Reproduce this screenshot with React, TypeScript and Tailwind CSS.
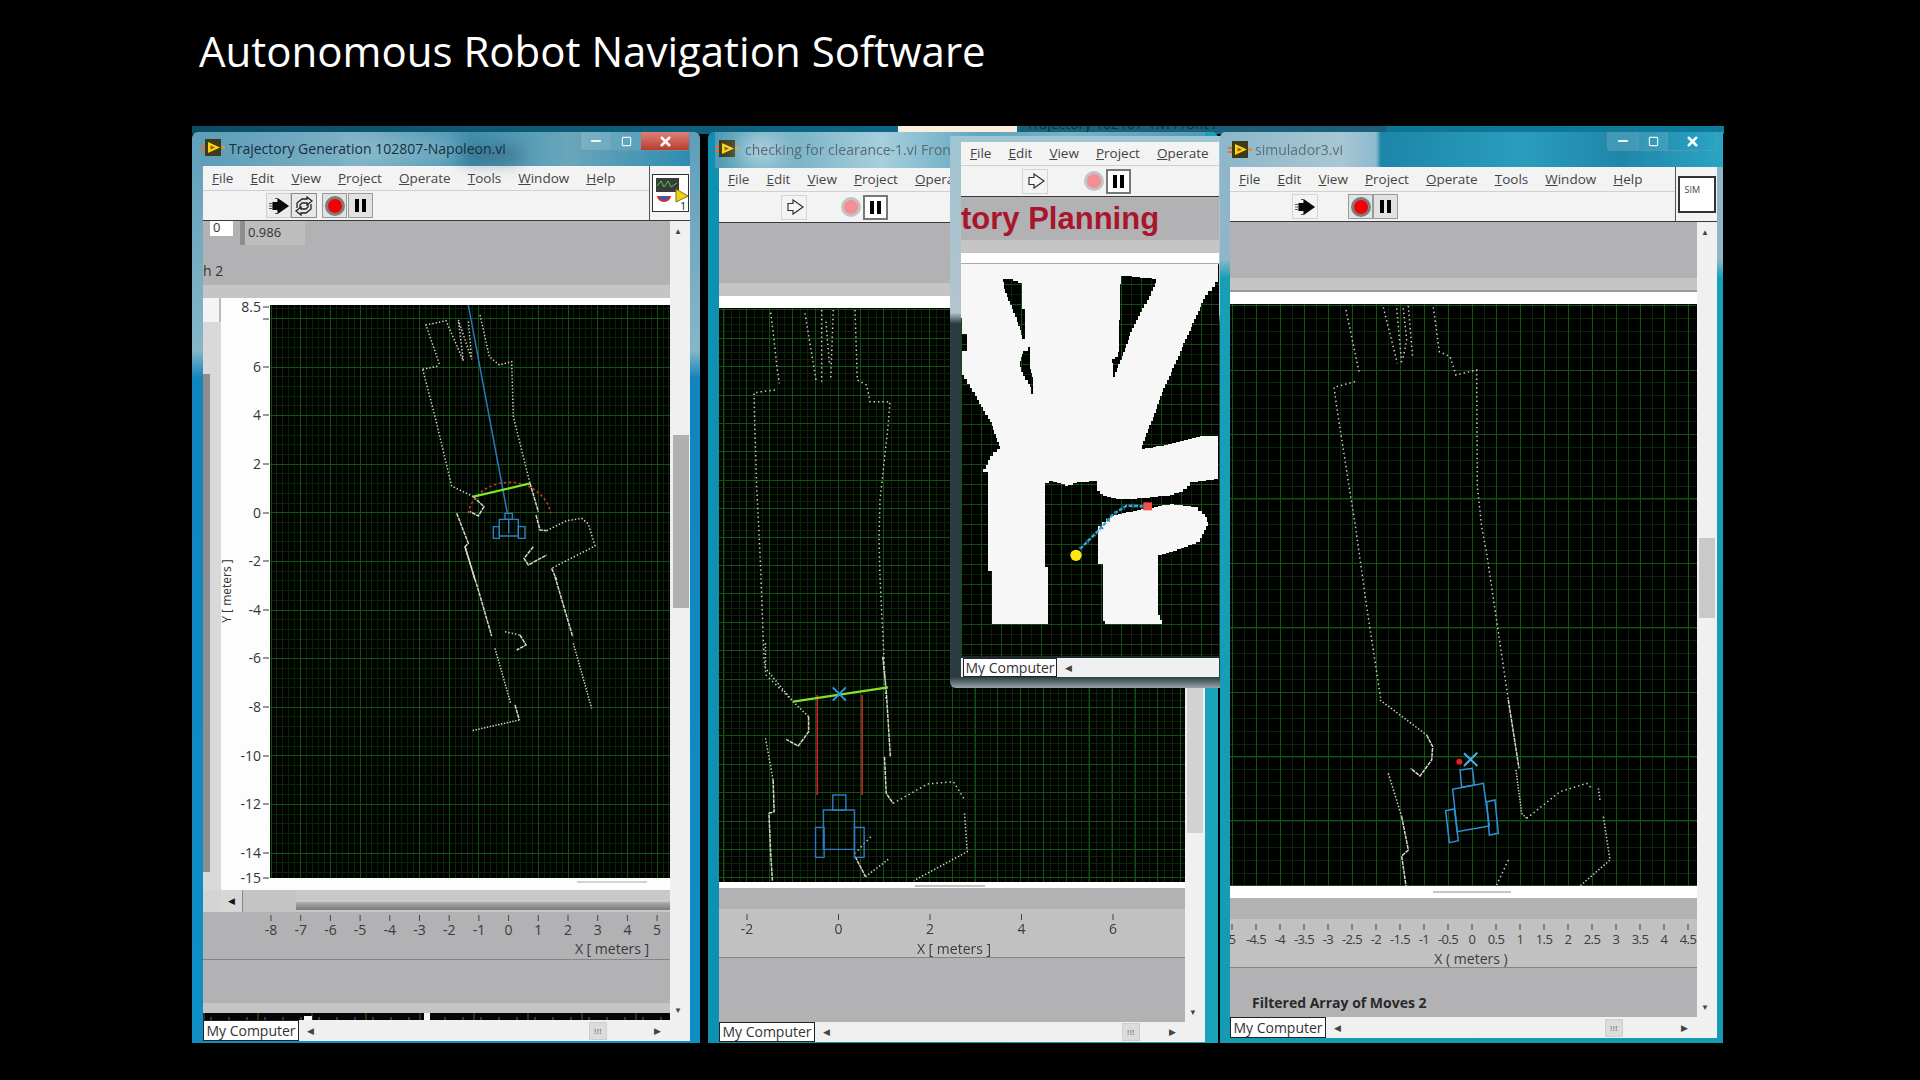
import React from 'react';
import { X, Minus, Square } from 'lucide-react';

type Pts = number[][];

const MENU_LONG = ['File', 'Edit', 'View', 'Project', 'Operate', 'Tools', 'Window', 'Help'];

const range = (o: number, a: number, b: number, step: number) => {
  const r: number[] = [];
  for (let v = o - Math.ceil((o - a) / step) * step; v <= b; v += step) r.push(v);
  return r;
};

const line = (pts: Pts) => pts.map((p) => p.join(',')).join(' ');

// turns a polygon into the blocky outline the occupancy map has
const stair = (pts: Pts, step: number) => {
  let d = '';
  pts.forEach((p, i) => {
    const q = pts[(i + 1) % pts.length];
    const n = Math.max(1, Math.round(Math.max(Math.abs(q[0] - p[0]), Math.abs(q[1] - p[1])) / step));
    if (i === 0) d += `M${p[0]} ${p[1]}`;
    for (let k = 1; k <= n; k++) {
      const x = p[0] + ((q[0] - p[0]) * k) / n;
      const y = p[1] + ((q[1] - p[1]) * k) / n;
      d += ` L${x} ${p[1] + ((q[1] - p[1]) * (k - 1)) / n} L${x} ${y}`;
    }
  });
  return d + ' Z ';
};

const Grid: React.FC<{ x0: number; x1: number; y0: number; y1: number; ox: number; oy: number; mx: number; my: number; nx: number; ny: number; major?: string; minor?: string }> = ({ x0, x1, y0, y1, ox, oy, mx, my, nx, ny, major = '#155015', minor = '#0a240a' }) => (
  <g shapeRendering="crispEdges" strokeWidth={1}>
    <rect x={x0} y={y0} width={x1 - x0} height={y1 - y0} fill="#000200" />
    <g stroke={minor}>
      {range(ox, x0, x1, nx).map((x) => <line key={x} x1={x} x2={x} y1={y0} y2={y1} />)}
      {range(oy, y0, y1, ny).map((y) => <line key={y} x1={x0} x2={x1} y1={y} y2={y} />)}
    </g>
    <g stroke={major}>
      {range(ox, x0, x1, mx).map((x) => <line key={x} x1={x} x2={x} y1={y0} y2={y1} />)}
      {range(oy, y0, y1, my).map((y) => <line key={y} x1={x0} x2={x1} y1={y} y2={y} />)}
    </g>
  </g>
);

// a group whose coordinates are those read off a crop of the screen
const Crop: React.FC<{ ox: number; oy: number; sx?: number; sy?: number; children: React.ReactNode }> = ({ ox, oy, sx = 3, sy = 3, children }) => (
  <g transform={`translate(${ox} ${oy}) scale(${1 / sx} ${1 / sy})`} fill="none">{children}</g>
);

const Dots: React.FC<{ pts: Pts; gap?: number }> = ({ pts, gap = 3 }) => (
  <polyline points={line(pts)} stroke="#d4d4ca" strokeWidth={1.5} strokeDasharray={`1.4 ${gap}`} vectorEffect="non-scaling-stroke" />
);

const Wall: React.FC<{ pts: Pts }> = ({ pts }) => (
  <polyline points={line(pts)} stroke="#d8d8cc" strokeWidth={1.5} strokeDasharray="4 0.8" vectorEffect="non-scaling-stroke" />
);

const Stroke: React.FC<{ pts: Pts; color: string; w: number }> = ({ pts, color, w }) => (
  <polyline points={line(pts)} stroke={color} strokeWidth={w} vectorEffect="non-scaling-stroke" />
);

const Menu: React.FC<{ items?: string[]; className: string }> = ({ items = MENU_LONG, className }) => (
  <div className={`flex items-center gap-[17px] pl-[9px] bg-[#f3f3f3] border-b border-[#d0d0d0] text-[13.5px] text-[#444] shrink-0 ${className}`}>
    {items.map((m) => (
      <span key={m}><span className="underline">{m[0]}</span>{m.slice(1)}</span>
    ))}
  </div>
);

const RunArrow: React.FC<{ hollow?: boolean }> = ({ hollow }) => (
  <svg width="22" height="18" viewBox="0 0 22 18">
    <path d="M10 2 L20 9 L10 16 V12.5 H5 V5.5 H10 Z" fill={hollow ? '#f6f6f6' : '#0a0a0a'} stroke={hollow ? '#333' : '#0a0a0a'} strokeWidth="1.2" />
    {!hollow && <path d="M1 6.5h3M1 9h3M1 11.5h3M7 1.5h3M7 16.5h3" stroke="#555" strokeWidth="1.1" />}
  </svg>
);

const RunOnce: React.FC = () => (
  <svg width="22" height="20" viewBox="0 0 22 20" fill="none" stroke="#222" strokeWidth="1.3">
    <path d="M4 12 V7 L9 3 H14 V1 L19 5 L14 9 V7 H9 L7 9 V12" />
    <path d="M18 8 V13 L13 17 H8 V19 L3 15 L8 11 V13 H13 L15 11 V8" />
  </svg>
);

const Record: React.FC<{ dim?: boolean }> = ({ dim }) => (
  <span className={`flex items-center justify-center w-[25px] h-[25px] ${dim ? '' : 'border border-[#9a9a9a] bg-[#e2e2e2]'}`}>
    <span className={`block w-[20px] h-[20px] rounded-full border-[3px] ${dim ? 'bg-[#f38e95] border-[#c3c3c3]' : 'bg-[#f40000] border-[#7d7d7d]'}`} />
  </span>
);

const Pause: React.FC<{ dim?: boolean }> = ({ dim }) => (
  <span className={`flex items-center justify-center gap-[3px] w-[25px] h-[25px] ${dim ? 'border-2 border-[#777] bg-white' : 'border border-[#9a9a9a] bg-[#e2e2e2]'}`}>
    <span className="block w-[4px] h-[13px] bg-black" />
    <span className="block w-[4px] h-[13px] bg-black" />
  </span>
);

const ViLogo: React.FC = () => (
  <svg width="24" height="22" viewBox="0 0 24 22" className="shrink-0">
    <rect x="4" y="2" width="16" height="17" fill="#3c3a18" />
    <path d="M0 8h4v2H0zM0 12h4v2H0z" fill="#e5702a" />
    <path d="M20 9h4v3h-4z" fill="#d59a2a" />
    <path d="M7 5 L19 10.5 L7 16 Z" fill="#f2d90d" />
    <path d="M9.5 8.5 L14 10.5 L9.5 12.5 Z" fill="#c33a2a" />
  </svg>
);

const WinButtons: React.FC<{ red?: boolean }> = ({ red }) => (
  <div className="flex items-stretch h-[19px] border border-[#6d98ad]/70 border-t-0 rounded-b-[4px] overflow-hidden">
    <span className="flex items-center justify-center w-[30px] bg-white/15">
      <Minus size={14} strokeWidth={3.5} className="text-white/90" />
    </span>
    <span className="flex items-center justify-center w-[30px] bg-white/10 border-x border-[#6d98ad]/60">
      <Square size={11} strokeWidth={2.5} className="text-white/90" />
    </span>
    <span className={`flex items-center justify-center w-[48px] ${red ? 'bg-linear-to-b from-[#d9827a] to-[#bd3a2a]' : ''}`}>
      <X size={15} strokeWidth={4} className="text-white" />
    </span>
  </div>
);

const StatusBar: React.FC<{ className: string; tailClass: string }> = ({ className, tailClass }) => (
  <div className={`flex items-center bg-[#f0f0f0] shrink-0 ${className}`}>
    <span className="flex items-center justify-center w-[96px] h-full bg-white border border-[#222] text-[14px] leading-none whitespace-nowrap text-[#333]">My Computer</span>
    <span className="ml-[8px] text-[9px] text-[#444]">◀</span>
    <span className="flex-1" />
    <span className="flex items-center justify-center w-[18px] h-[18px] bg-[#dcdcdc] border border-[#cfcfcf] text-[8px] tracking-[0.5px] text-[#555]">!!!</span>
    <span className={tailClass} />
    <span className="text-[9px] text-[#444]">▶</span>
    <span className="w-[29px]" />
  </div>
);

const VScroll: React.FC<{ thumbClass: string }> = ({ thumbClass }) => (
  <div className="relative w-[20px] bg-[#f0f0f0] shrink-0">
    <span className="absolute left-[4px] top-[6px] text-[8px] leading-none text-[#444]">▲</span>
    <span className={`absolute ${thumbClass}`} />
    <span className="absolute left-[4px] bottom-[6px] text-[8px] leading-none text-[#444]">▼</span>
  </div>
);

const AxisX: React.FC<{ x: number; y: number; w: number; h: number; labels: string[]; x0: number; step: number; tick: number; label: string; lx: number; ly: number; tight?: boolean }> = ({ x, y, w, h, labels, x0, step, tick, label, lx, ly, tight }) => (
  <svg viewBox={`${x} ${y} ${w} ${h}`} width={w} height={h} className="block shrink-0" fill="#3b3b3b" fontSize={tight ? 13 : 14}>
    {labels.map((t, i) => (
      <g key={t + i}>
        <line x1={x0 + i * step} x2={x0 + i * step} y1={tick} y2={tick + 6} stroke="#444" />
        <text x={x0 + i * step} y={tick + 20} textAnchor="middle" letterSpacing={tight ? -0.6 : 0}>{t}</text>
      </g>
    ))}
    <text x={lx} y={ly} textAnchor="middle" fontSize="14">{label}</text>
  </svg>
);

const Plot1: React.FC = () => {
  const yl: [string, number][] = [['8.5', 307], ['6', 367], ['4', 415], ['2', 464], ['0', 513], ['-2', 561], ['-4', 610], ['-6', 658], ['-8', 707], ['-10', 756], ['-12', 804], ['-14', 853], ['-15', 878]];
  return (
    <svg viewBox="221 298 449 592" width={449} height={592} className="block shrink-0">
      <rect x="221" y="298" width="449" height="592" fill="#fdfdfd" />
      <svg x="270" y="305" width="400" height="573" viewBox="270 305 400 573">
        <Grid x0={270} x1={670} y0={305} y1={878} ox={271} oy={367} mx={29.7} my={48.6} nx={5.94} ny={9.72} />
        <Crop ox={400} oy={300}>
          <Dots gap={2} pts={[[118, 192], [78, 75], [138, 62], [190, 182], [175, 60], [215, 178], [205, 60]]} />
          <Dots gap={2} pts={[[240, 45], [268, 170], [298, 195], [335, 185], [340, 350], [390, 550]]} />
          <Wall pts={[[390, 550], [415, 635]]} />
          <Dots gap={2} pts={[[68, 208], [115, 198]]} />
          <Dots gap={2} pts={[[68, 208], [105, 350], [155, 558], [220, 590]]} />
          <Wall pts={[[220, 590], [252, 620], [235, 648], [210, 635]]} />
          <Wall pts={[[170, 640], [205, 730], [195, 740], [225, 840]]} />
          <Wall pts={[[408, 645], [420, 690], [440, 692]]} />
          <Dots gap={2} pts={[[440, 692], [500, 662], [545, 655], [565, 672], [585, 738], [455, 805]]} />
          <Wall pts={[[455, 805], [470, 840]]} />
          <Wall pts={[[400, 740], [372, 775], [385, 795], [440, 765]]} />
          <path d="M205 640 A125 110 0 0 1 452 640" stroke="#c8382c" strokeWidth={1.6} strokeDasharray="2.5 2.5" vectorEffect="non-scaling-stroke" />
          <Stroke pts={[[205, 15], [322, 640]]} color="#2a78b8" w={1.5} />
          <Stroke pts={[[220, 590], [390, 550]]} color="#7ee62a" w={2.2} />
          <g stroke="#2f7fc4" strokeWidth={1.4}>
            <rect x="280" y="680" width="18" height="35" vectorEffect="non-scaling-stroke" />
            <rect x="298" y="658" width="57" height="50" vectorEffect="non-scaling-stroke" />
            <rect x="355" y="680" width="20" height="35" vectorEffect="non-scaling-stroke" />
            <rect x="315" y="640" width="22" height="18" vectorEffect="non-scaling-stroke" />
            <line x1="326" y1="658" x2="326" y2="700" vectorEffect="non-scaling-stroke" />
          </g>
        </Crop>
        <Crop ox={420} oy={540}>
          <Wall pts={[[135, 20], [175, 150], [215, 288]]} />
          <Dots gap={1.5} pts={[[225, 325], [272, 490]]} />
          <Wall pts={[[285, 495], [298, 540]]} />
          <Dots gap={1.5} pts={[[298, 540], [155, 572]]} />
          <Wall pts={[[405, 110], [458, 290]]} />
          <Dots gap={1.5} pts={[[460, 310], [515, 505]]} />
          <Dots gap={2} pts={[[255, 275], [300, 285]]} />
          <Wall pts={[[300, 285], [318, 315], [290, 330]]} />
        </Crop>
      </svg>
      <g fontSize="14" fill="#333">
        {yl.map(([t, y]) => (
          <g key={t}>
            <text x="261" y={y + 5} textAnchor="end">{t}</text>
            <line x1="263" x2="269" y1={y} y2={y} stroke="#333" />
          </g>
        ))}
        <line x1="263" x2="269" y1="319" y2="319" stroke="#333" />
        <text transform="translate(231 591) rotate(-90)" textAnchor="middle" fontSize="12">Y [ meters ]</text>
      </g>
      <line x1="577" x2="647" y1="882" y2="882" stroke="#c4c4c4" strokeWidth="1.5" />
    </svg>
  );
};

const Plot2: React.FC = () => (
  <svg viewBox="719 308 466 574" width={466} height={574} className="block shrink-0">
    <Grid x0={719} x1={1185} y0={308} y1={882} ox={838} oy={338.3} mx={22.85} my={28.4} nx={7.6} ny={7.1} />
    <Crop ox={740} oy={300}>
      <Dots pts={[[92, 38], [100, 100], [110, 195], [118, 250]]} />
      <Dots pts={[[105, 270], [42, 278], [45, 400], [50, 560], [60, 760], [72, 1075], [78, 1125], [150, 1195]]} />
      <Dots pts={[[195, 40], [228, 240]]} />
      <Dots pts={[[245, 30], [245, 245]]} />
      <Dots pts={[[258, 65], [268, 190]]} />
      <Dots pts={[[280, 30], [272, 240]]} />
      <Dots pts={[[345, 30], [352, 240], [380, 255], [390, 305], [450, 305], [445, 370], [420, 600], [417, 720], [420, 830], [432, 1075], [438, 1200]]} />
    </Crop>
    <Crop ox={700} oy={640} sx={2.9}>
      <Dots gap={2} pts={[[190, 10], [190, 85], [270, 185], [315, 230]]} />
      <Wall pts={[[315, 230], [315, 275], [285, 318], [250, 298]]} />
      <Dots gap={2} pts={[[190, 295], [212, 420]]} />
      <Wall pts={[[212, 420], [215, 515], [200, 520], [205, 640], [210, 722]]} />
      <Wall pts={[[530, 50], [540, 150], [552, 350]]} />
      <Wall pts={[[535, 350], [540, 460], [560, 490]]} />
      <Dots gap={3} pts={[[560, 490], [660, 432], [735, 425], [765, 475]]} />
      <Dots gap={2} pts={[[767, 520], [775, 635], [620, 722]]} />
      <Dots gap={3} pts={[[495, 590], [450, 640]]} />
      <Wall pts={[[450, 650], [480, 710]]} />
      <Dots gap={2} pts={[[480, 710], [550, 655]]} />
      <Stroke pts={[[340, 165], [340, 465]]} color="#c92a20" w={1.6} />
      <Stroke pts={[[470, 165], [470, 465]]} color="#c92a20" w={1.6} />
      <Stroke pts={[[270, 185], [545, 142]]} color="#84e02a" w={2.4} />
      <Stroke pts={[[385, 142], [423, 182]]} color="#2f9be0" w={2} />
      <Stroke pts={[[423, 142], [385, 182]]} color="#2f9be0" w={2} />
      <g stroke="#2f78c4" strokeWidth={1.4}>
        <rect x="385" y="465" width="38" height="45" vectorEffect="non-scaling-stroke" />
        <rect x="358" y="510" width="90" height="118" vectorEffect="non-scaling-stroke" />
        <rect x="335" y="562" width="25" height="90" vectorEffect="non-scaling-stroke" />
        <rect x="448" y="562" width="28" height="90" vectorEffect="non-scaling-stroke" />
      </g>
    </Crop>
  </svg>
);

const Plot3: React.FC = () => (
  <svg viewBox="1230 304 467 582" width={467} height={582} className="block shrink-0">
    <Grid x0={1230} x1={1697} y0={304} y1={886} ox={1472} oy={370} mx={24} my={64.4} nx={12} ny={12.9} />
    <Crop ox={1320} oy={300}>
      <Dots pts={[[78, 30], [118, 220]]} />
      <Dots pts={[[105, 245], [42, 262], [50, 320], [92, 590], [105, 670], [140, 920], [182, 1195]]} />
      <Dots pts={[[190, 22], [232, 190]]} />
      <Dots pts={[[230, 25], [245, 190]]} />
      <Dots pts={[[250, 25], [260, 120], [248, 180]]} />
      <Dots pts={[[265, 18], [278, 175]]} />
      <Dots pts={[[340, 22], [358, 155], [390, 170], [408, 225], [470, 210], [472, 560], [485, 680], [500, 760], [565, 1200]]} />
    </Crop>
    <Crop ox={1220} oy={700}>
      <Dots gap={2} pts={[[480, 0], [620, 105]]} />
      <Wall pts={[[620, 105], [638, 140], [635, 180], [600, 228], [572, 205]]} />
      <Dots gap={2} pts={[[505, 220], [545, 350]]} />
      <Wall pts={[[545, 350], [565, 450], [545, 468], [558, 558]]} />
      <Wall pts={[[865, 0], [897, 205]]} />
      <Dots gap={1.5} pts={[[888, 210], [905, 340], [920, 355]]} />
      <Dots gap={3} pts={[[920, 355], [1020, 275], [1100, 250], [1115, 265]]} />
      <Dots gap={2} pts={[[1135, 265], [1140, 300]]} />
      <Dots gap={2} pts={[[1150, 350], [1170, 480], [1080, 558]]} />
      <Dots gap={3} pts={[[865, 480], [830, 555]]} />
      <g stroke="#2f8fd8" strokeWidth={1.5}>
        <polygon points="720,210 757,205 763,255 725,262" vectorEffect="non-scaling-stroke" />
        <polygon points="698,268 790,250 808,378 712,395" vectorEffect="non-scaling-stroke" />
        <polygon points="677,332 703,327 715,422 688,428" vectorEffect="non-scaling-stroke" />
        <polygon points="800,305 825,300 835,400 808,405" vectorEffect="non-scaling-stroke" />
      </g>
      <Stroke pts={[[732, 160], [772, 198]]} color="#43b4ea" w={2} />
      <Stroke pts={[[772, 158], [732, 198]]} color="#43b4ea" w={2} />
      <circle cx="718" cy="185" r="9" fill="#e5201a" />
    </Crop>
  </svg>
);

const mapOuter: Pts = [[33, 0], [805, 0], [805, 70], [765, 120], [700, 265], [640, 400], [575, 570], [630, 560], [750, 530], [805, 530], [805, 660], [730, 670], [700, 700], [660, 710], [550, 720], [510, 720], [470, 712], [440, 690], [440, 665], [395, 670], [355, 680], [310, 665], [285, 680], [285, 925], [295, 930], [295, 1095], [127, 1095], [127, 935], [115, 930], [115, 640], [100, 630], [120, 590], [150, 560], [125, 490], [75, 400], [35, 335], [35, 275], [50, 275], [50, 225], [35, 225]];
const mapBulb: Pts = [[445, 800], [480, 770], [550, 755], [660, 735], [735, 745], [765, 775], [775, 800], [750, 850], [680, 875], [625, 890], [625, 1068], [635, 1095], [470, 1095], [458, 1075], [458, 915], [443, 910]];
const mapHoles: Pts[] = [
  [[160, 60], [178, 60], [215, 80], [215, 150], [225, 155], [225, 240], [218, 240], [210, 200], [190, 150], [165, 90]],
  [[235, 265], [241, 265], [241, 330], [250, 375], [250, 405], [245, 405], [240, 375], [212, 325], [210, 305], [218, 275]],
  [[512, 50], [618, 60], [615, 85], [545, 220], [520, 290], [490, 365], [487, 300], [505, 290]],
];

const OccupancyMap: React.FC = () => (
  <svg viewBox="961 265 258 392" width={258} height={392} className="block shrink-0">
    <Grid x0={961} x1={1219} y0={265} y1={657} ox={961} oy={265} mx={20} my={20} nx={10} ny={10} major="#144a14" minor="#0a220a" />
    <Crop ox={950} oy={260}>
      <path d={stair(mapOuter, 12) + mapHoles.map((h) => stair(h, 12)).join('') + stair(mapBulb, 12)} fill="#f7f7f8" fillRule="evenodd" shapeRendering="crispEdges" />
      <polyline points="390,870 450,810 490,765 530,740 580,742" stroke="#3aa5c8" strokeWidth={2.5} strokeDasharray="4 1.5" vectorEffect="non-scaling-stroke" />
      <polyline points="390,870 450,810 490,765 530,740 580,742" stroke="#1d6c8a" strokeWidth={5} strokeDasharray="1 9" vectorEffect="non-scaling-stroke" />
      <rect x="580" y="730" width="26" height="24" fill="#f05050" />
      <circle cx="378" cy="889" r="17" fill="#ffe60d" />
    </Crop>
  </svg>
);

const TickStrip: React.FC = () => (
  <svg viewBox="203 1013 467 7" width={467} height={7} className="block shrink-0">
    <rect x="203" y="1013" width="467" height="7" fill="#050505" />
    {range(258, 203, 670, 54).map((x) => <line key={x} x1={x} x2={x} y1="1013" y2="1020" stroke="#5a5a20" />)}
    {range(211, 203, 670, 18).map((x) => <line key={x} x1={x} x2={x} y1="1017" y2="1020" stroke="#6b6b6b" />)}
    <rect x="304" y="1016" width="8" height="4" fill="#f5f5f5" />
    <rect x="424" y="1013" width="6" height="7" fill="#f5f5f5" />
  </svg>
);

export default function App() {
  const xs1 = ['-8', '-7', '-6', '-5', '-4', '-3', '-2', '-1', '0', '1', '2', '3', '4', '5'];
  const xs3 = ['5', '-4.5', '-4', '-3.5', '-3', '-2.5', '-2', '-1.5', '-1', '-0.5', '0', '0.5', '1', '1.5', '2', '2.5', '3', '3.5', '4', '4.5'];
  return (
    <div className="relative w-[1920px] h-[1080px] overflow-hidden bg-black font-['Open_Sans',sans-serif]">
      <h1 className="pt-[22px] pl-[199px] text-[42px] leading-[58px] font-normal text-white">Autonomous Robot Navigation Software</h1>

      <div className="absolute inset-0 blur-[0.4px]">
        {/* strip of the windows lying behind the four open ones */}
        <div className="absolute left-[192px] top-[126px] w-[1532px] h-[8px] bg-linear-to-r from-[#0c4d66] via-[#0e6a88] to-[#0f7c9d]" />
        <div className="absolute left-[1020px] top-[126px] w-[366px] h-[6px] overflow-hidden bg-[#1b5f78]">
          <span className="block -mt-[10px] text-[14px] leading-[16px] pl-[6px] text-[#0d3342] whitespace-nowrap">Trajectory 102107-1.vi Front P</span>
        </div>
        <div className="absolute left-[898px] top-[126px] w-[119px] h-[10px] bg-[#fbeedc]" />

        {/* Trajectory Generation window */}
        <div className="absolute left-[192px] top-[132px] w-[508px] h-[911px] pl-[11px] pr-[10px] flex flex-col rounded-t-[6px] overflow-hidden bg-[linear-gradient(180deg,#5f9fba_0%,#86b6c8_24%,#1185bd_27%,#0f8ec6_100%)]">
          <div className="relative h-[34px] flex items-center gap-[4px] pb-[2px] shrink-0 -ml-[2px] bg-[linear-gradient(90deg,#5d9db8_0%,#7bb0c4_30%,#3f8fae_55%,#6aa6bb_75%,#2f8cb0_100%)]">
            <span className="absolute left-[150px] top-[8px] w-[110px] h-[22px] bg-white/25 blur-md" />
            <span className="absolute left-[260px] top-[14px] w-[60px] h-[18px] bg-[#2b4e63]/40 blur-sm" />
            <ViLogo />
            <span className="relative text-[14px] text-[#16303e] whitespace-nowrap">Trajectory Generation 102807-Napoleon.vi</span>
            <span className="flex-1" />
            <span className="relative self-start"><WinButtons red /></span>
          </div>
          <div className="flex flex-1 min-h-0 flex-col">
            <div className="flex h-[55px] shrink-0 border-b border-[#3a3a3a]">
              <div className="flex flex-col flex-1 min-w-0">
                <Menu className="h-[25px]" />
                <div className="flex items-center h-[29px] pl-[63px] bg-[#f3f3f3]">
                  <span className="flex items-center justify-center w-[25px] h-[25px] border border-[#cfcfcf] bg-[#ececec]"><RunArrow /></span>
                  <span className="flex items-center justify-center w-[26px] h-[25px] border border-[#8a8a8a] bg-[#e8e8e8]"><RunOnce /></span>
                  <span className="w-[5px]" />
                  <Record />
                  <span className="w-[1px]" />
                  <Pause />
                </div>
              </div>
              <div className="flex items-center justify-center w-[41px] bg-[#f3f3f3] border-l border-[#555] shrink-0">
                <svg width="37" height="38" viewBox="0 0 37 38">
                  <rect x="0.5" y="0.5" width="36" height="37" fill="#fff" stroke="#333" />
                  <rect x="4" y="4" width="23" height="14" fill="#3a3a3a" />
                  <path d="M5 12 L9 7 L12 13 L16 7 L19 13 L25 9" stroke="#41d24a" fill="none" />
                  <path d="M5 22 A7 6 0 0 0 19 22 Z" fill="#c8313a" />
                  <path d="M8 22 A4 4 0 0 0 16 22 Z" fill="#3a58b8" />
                  <path d="M24 15 L36 22 L24 28 Z" fill="#f0d40a" stroke="#807010" />
                  <text x="28" y="36" fontSize="11" fill="#222">1</text>
                </svg>
              </div>
            </div>
            <div className="flex h-[799px] shrink-0">
              <div className="flex flex-col flex-1 min-w-0 bg-[#b2b1b3]">
                <div className="flex flex-col h-[64px] shrink-0">
                  <div className="flex items-start pl-[7px] gap-[7px] text-[13px] text-[#333]">
                    <span className="w-[23px] h-[15px] pl-[3px] leading-[13px] bg-white">0</span>
                    <span className="w-[65px] h-[24px] pl-[3px] leading-[22px] bg-[#bdbdbd] border-l-[5px] border-[#8e8e8e]">0.986</span>
                  </div>
                  <span className="mt-[17px] text-[14px] leading-[18px] text-[#333]">h 2</span>
                </div>
                <div className="h-[13px] bg-[#c6c5c6] shrink-0" />
                <div className="flex h-[592px] shrink-0">
                  <div className="flex flex-col w-[18px] shrink-0 bg-[#d9d9d9]">
                    <div className="h-[24px] bg-[#f4f4f4] border-r-2 border-[#bbb]" />
                    <div className="w-[7px] flex-1 mt-[52px] mb-[18px] bg-[#8e8e8e]" />
                  </div>
                  <Plot1 />
                </div>
                <div className="flex h-[22px] shrink-0 bg-[#c9c9c9]">
                  <span className="w-[18px] bg-[#d4d4d4]" />
                  <span className="flex items-center justify-center w-[22px] bg-[#d7d7d7] border-r border-[#888] text-[9px] text-[#111]">◀</span>
                  <span className="w-[53px] bg-[#c4c4c4]" />
                  <span className="flex-1 mt-[12px] h-[8px] bg-linear-to-b from-[#b0b0b0] to-[#7a7a7a]" />
                </div>
                <AxisX x={203} y={912} w={467} h={47} labels={xs1} x0={271} step={29.7} tick={915} label="X [ meters ]" lx={612} ly={954} />
                <div className="h-[1px] bg-[#858585] shrink-0" />
                <div className="h-[43px] shrink-0" />
                <div className="h-[10px] bg-[#c6c5c6] shrink-0" />
                <TickStrip />
              </div>
              <VScroll thumbClass="left-[3px] top-[214px] w-[16px] h-[173px] bg-[#b0b0b0]" />
            </div>
            <StatusBar className="h-[21px]" tailClass="w-[47px]" />
          </div>
        </div>

        {/* checking for clearance window */}
        <div className="absolute left-[708px] top-[132px] w-[510px] h-[911px] pl-[11px] pr-[13px] flex flex-col rounded-t-[6px] overflow-hidden bg-[linear-gradient(90deg,#0f8fb2_0%,#1aa3ba_100%)]">
          <div className="relative h-[36px] flex items-center gap-[6px] pb-[2px] shrink-0 -ml-[4px] bg-[linear-gradient(90deg,#4f9ab6_0%,#84b9cc_20%,#a7cfdc_34%,#5ea5bf_55%,#79b3c7_72%,#4f9ab6_100%)]">
            <span className="absolute left-[25px] top-[2px] w-[40px] h-[34px] bg-white/50 blur-md" />
            <ViLogo />
            <span className="relative text-[14px] text-[#5a6a70] whitespace-nowrap">checking for clearance-1.vi Front Panel</span>
          </div>
          <div className="flex flex-col flex-1 min-h-0">
            <div className="flex flex-col h-[55px] shrink-0 border-b border-[#3a3a3a] bg-[#f3f3f3]">
              <Menu className="h-[24px]" items={['File', 'Edit', 'View', 'Project', 'Operate']} />
              <div className="flex items-center h-[30px] pl-[62px]">
                <span className="flex items-center justify-center w-[26px] h-[25px] border border-[#d4d4d4]"><RunArrow hollow /></span>
                <span className="w-[31px]" />
                <Record dim />
                <Pause dim />
              </div>
            </div>
            <div className="flex h-[799px] shrink-0">
              <div className="flex flex-col flex-1 min-w-0 bg-[#b2b1b3]">
                <div className="h-[60px] shrink-0" />
                <div className="h-[13px] bg-[#c6c5c6] shrink-0" />
                <div className="h-[12px] bg-white shrink-0" />
                <Plot2 />
                <div className="flex h-[6px] bg-white shrink-0 pl-[196px] pt-[3px]"><span className="w-[70px] h-[2px] bg-[#c4c4c4]" /></div>
                <div className="h-[21px] shrink-0" />
                <div className="bg-[#c2c1c2] shrink-0">
                  <AxisX x={719} y={909} w={466} h={48} labels={['-2', '0', '2', '4', '6']} x0={747} step={91.5} tick={914} label="X [ meters ]" lx={954} ly={954} />
                </div>
                <div className="h-[1px] bg-[#858585] shrink-0" />
                <div className="h-[64px] shrink-0" />
              </div>
              <VScroll thumbClass="left-[2px] top-[440px] w-[16px] h-[170px] bg-[#d2d2d2]" />
            </div>
            <StatusBar className="h-[20px]" tailClass="w-[29px]" />
          </div>
        </div>

        {/* trajectory planning window, the map */}
        <div className="absolute left-[950px] top-[136px] w-[272px] h-[552px] pt-[6px] pl-[11px] pr-[3px] flex flex-col rounded-bl-[6px] overflow-hidden bg-[linear-gradient(180deg,#9fc4d2_0%,#b4c4cc_32%,#2b3c40_34%,#2b3c40_98%,#9aa5a8_100%)]">
          <div className="flex flex-col h-[55px] shrink-0 border-b border-[#3a3a3a] bg-[#f3f3f3]">
            <Menu className="h-[24px]" items={['File', 'Edit', 'View', 'Project', 'Operate']} />
            <div className="flex items-center h-[30px] pl-[61px]">
              <span className="flex items-center justify-center w-[26px] h-[25px] border border-[#d4d4d4]"><RunArrow hollow /></span>
              <span className="w-[33px]" />
              <Record dim />
              <Pause dim />
            </div>
          </div>
          <div className="h-[43px] shrink-0 bg-[#b2b1b3] overflow-hidden">
            <span className="block whitespace-nowrap text-[31px] leading-[43px] font-bold text-[#a8162e] font-['Liberation_Sans',sans-serif]">tory Planning</span>
          </div>
          <div className="h-[13px] bg-[#c6c5c6] shrink-0" />
          <div className="h-[11px] bg-white border-b border-[#aaa] shrink-0" />
          <OccupancyMap />
          <div className="h-[2px] bg-[#1a2a2e] shrink-0" />
          <div className="flex items-center h-[19px] bg-[#f0f0f0] shrink-0 pl-[2px]">
            <span className="flex items-center justify-center w-[94px] h-full bg-white border border-[#222] text-[14px] leading-none whitespace-nowrap text-[#333]">My Computer</span>
            <span className="ml-[8px] text-[9px] text-[#444]">◀</span>
          </div>
        </div>

        {/* simulador window */}
        <div className="absolute left-[1220px] top-[132px] w-[503px] h-[911px] pl-[10px] pr-[6px] pb-[5px] flex flex-col overflow-hidden rounded-tl-[6px] bg-[linear-gradient(180deg,#8fb6c8_0%,#8fb6c8_14%,#16a0b8_16%,#149bb2_100%)]">
          <div className="relative h-[35px] flex items-center gap-[3px] shrink-0 -ml-[10px] -mr-[6px] pl-[8px] bg-[linear-gradient(90deg,#8cb6c9_0%,#a8c7d4_24%,#8dbace_31%,#1c86a8_32%,#2a9dbd_60%,#1f86aa_80%,#2ba5c4_100%)]">
            <ViLogo />
            <span className="text-[14px] text-[#5f6e76]">simulador3.vi</span>
            <span className="flex-1" />
            <span className="self-start mr-[6px]"><WinButtons /></span>
          </div>
          <div className="flex flex-col flex-1 min-h-0">
            <div className="flex h-[55px] shrink-0 border-b border-[#3a3a3a] bg-[#f3f3f3]">
              <div className="flex flex-col flex-1 min-w-0">
                <Menu className="h-[25px]" />
                <div className="flex items-center h-[29px] pl-[62px]">
                  <span className="flex items-center justify-center w-[26px] h-[25px] border border-[#d4d4d4]"><RunArrow /></span>
                  <span className="w-[30px]" />
                  <Record />
                  <Pause />
                </div>
              </div>
              <div className="flex items-center justify-center w-[42px] border-l border-[#555] shrink-0">
                <span className="block w-[38px] h-[37px] pl-[5px] pt-[6px] bg-white border-2 border-[#333] text-[9px] leading-[12px] text-[#444]">SIM</span>
              </div>
            </div>
            <div className="flex h-[795px] shrink-0">
              <div className="flex flex-col flex-1 min-w-0 bg-[#b2b1b3]">
                <div className="h-[56px] shrink-0" />
                <div className="h-[14px] bg-[#c6c5c6] border-b-2 border-[#9c9b9c] shrink-0" />
                <div className="h-[12px] bg-white shrink-0" />
                <Plot3 />
                <div className="flex h-[12px] bg-white shrink-0 pl-[203px] pt-[5px]"><span className="w-[78px] h-[2px] bg-[#c4c4c4]" /></div>
                <div className="h-[21px] shrink-0" />
                <div className="bg-[#c2c1c2] shrink-0">
                  <AxisX x={1230} y={919} w={467} h={48} labels={xs3} x0={1232} step={24} tick={924} label="X ( meters )" lx={1471} ly={964} tight />
                </div>
                <div className="h-[1px] bg-[#858585] shrink-0" />
                <div className="flex items-end h-[49px] pl-[22px] pb-[4px] shrink-0 text-[14px] font-bold text-[#2a2a2a]">Filtered Array of Moves 2</div>
              </div>
              <VScroll thumbClass="left-[2px] top-[316px] w-[16px] h-[80px] bg-[#c9c9c9]" />
            </div>
            <StatusBar className="h-[21px]" tailClass="w-[58px]" />
          </div>
        </div>
      </div>
    </div>
  );
}
